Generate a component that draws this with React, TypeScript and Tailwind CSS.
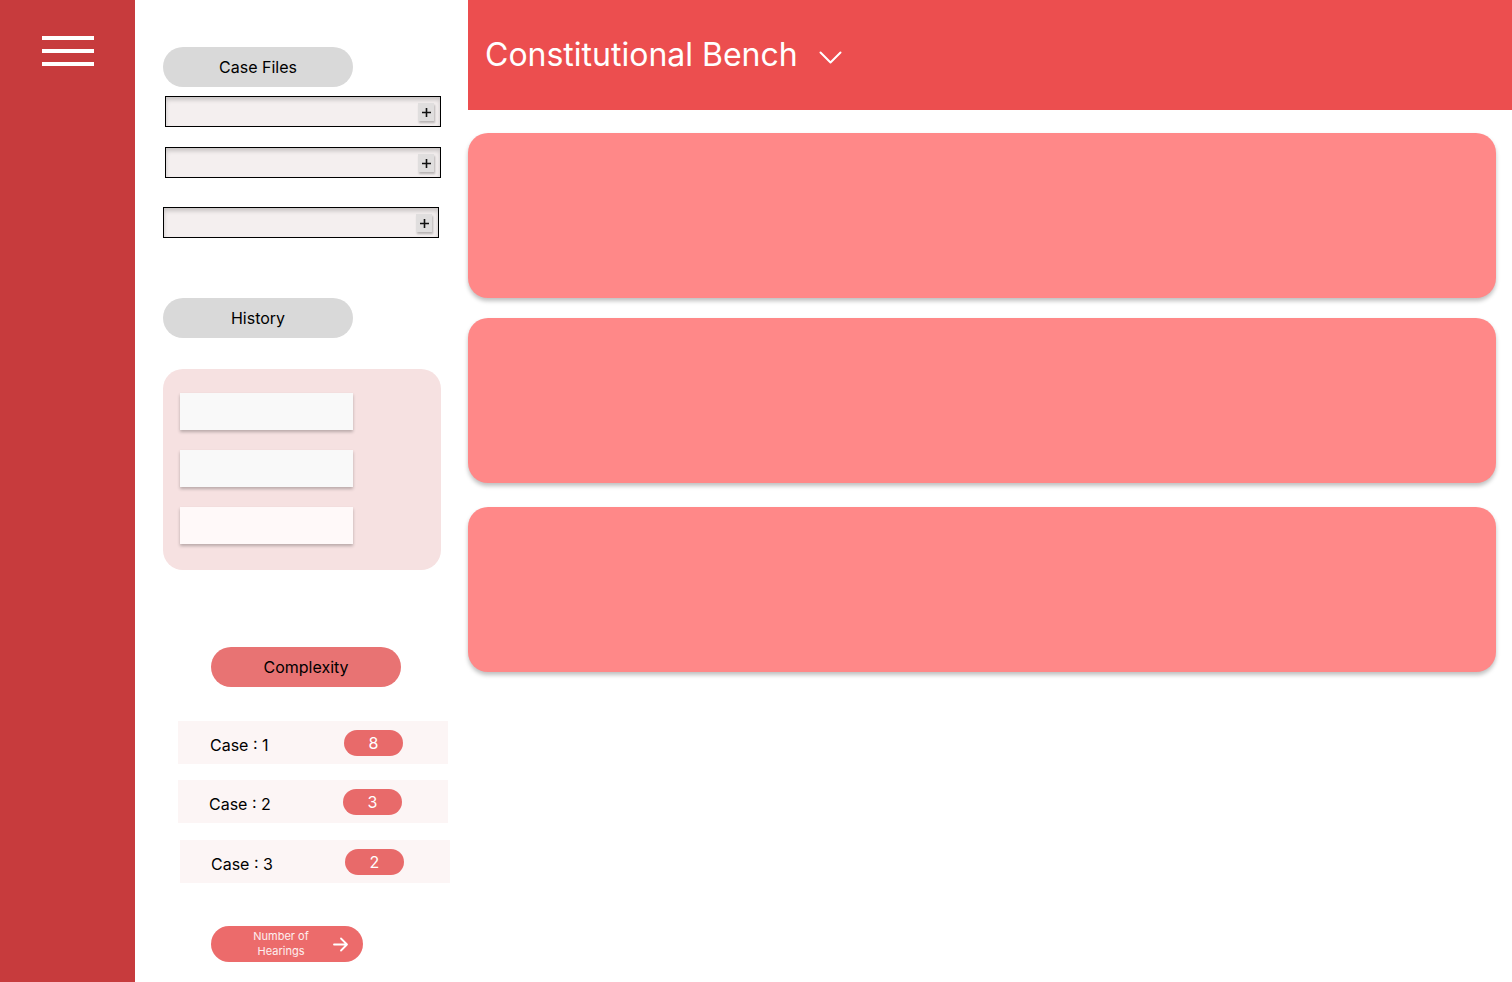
import React from 'react';

const cases = [
  { label: 'Case : 1', value: 8, shift: 'ml-[15px]', gap: 'mt-[34px]', text: 'pl-[32px]' },
  { label: 'Case : 2', value: 3, shift: 'ml-[15px]', gap: 'mt-[16px]', text: 'pl-[31px]' },
  { label: 'Case : 3', value: 2, shift: 'ml-[17px]', gap: 'mt-[17px]', text: 'pl-[31px]' },
];

const FileInput: React.FC<{ className: string }> = ({ className }) => (
  <div
    className={`relative h-[31px] w-[276px] border border-black bg-[#f4efef] shadow-[inset_0_3px_4px_rgba(0,0,0,0.18)] ${className}`}
  >
    <button className="absolute right-[6px] top-[6px] flex h-[18px] w-[16px] items-center justify-center bg-[#e0dede] shadow-[1px_2px_2px_rgba(0,0,0,0.25)]">
      <svg width="9" height="9" viewBox="0 0 9 9">
        <path d="M4.5 0v9M0 4.5h9" stroke="#111" strokeWidth="1.6" />
      </svg>
    </button>
  </div>
);

const PillButton: React.FC<{ label: string; className: string }> = ({ label, className }) => (
  <button
    className={`flex h-[40px] w-[190px] items-center justify-center rounded-[20px] text-[16px] text-black ${className}`}
  >
    {label}
  </button>
);

export default function App() {
  return (
    <div className="flex h-[982px] w-full overflow-hidden bg-white font-['Inter',sans-serif]">
      {/* sidebar */}
      <aside className="w-[135px] shrink-0 bg-[#c73b3d] pl-[42px] pt-[36px]">
        <div className="flex flex-col gap-[9px]">
          <span className="h-[4px] w-[52px] bg-white" />
          <span className="h-[4px] w-[52px] bg-white" />
          <span className="h-[4px] w-[52px] bg-white" />
        </div>
      </aside>

      {/* left panel */}
      <section className="flex w-[333px] shrink-0 flex-col items-start pl-[28px]">
        <PillButton label="Case Files" className="mt-[47px] bg-[#d9d9d9]" />
        <FileInput className="ml-[2px] mt-[9px]" />
        <FileInput className="ml-[2px] mt-[20px]" />
        <FileInput className="mt-[29px]" />

        <PillButton label="History" className="mt-[60px] bg-[#d9d9d9]" />
        <div className="mt-[31px] flex h-[201px] w-[278px] flex-col gap-[20px] rounded-[20px] bg-[#f6e1e1] pl-[17px] pt-[24px]">
          <div className="h-[37px] w-[173px] bg-[#f9f9f9] shadow-[0_2px_3px_rgba(0,0,0,0.25)]" />
          <div className="h-[37px] w-[173px] bg-[#f9f9f9] shadow-[0_2px_3px_rgba(0,0,0,0.25)]" />
          <div className="h-[37px] w-[173px] bg-[#fff9f9] shadow-[0_2px_3px_rgba(0,0,0,0.25)]" />
        </div>

        <PillButton label="Complexity" className="ml-[48px] mt-[77px] bg-[#e87373]" />

        {cases.map((c) => (
          <div
            key={c.label}
            className={`flex h-[43px] w-[270px] items-center bg-[#fcf5f5] ${c.shift} ${c.gap} ${c.text}`}
          >
            <span className="mt-[4px] w-[134px] text-[16px] text-black">{c.label}</span>
            <span className="flex h-[26px] w-[59px] items-center justify-center rounded-[13px] bg-[#e86a6a] text-[16px] text-white">
              {c.value}
            </span>
          </div>
        ))}

        <button className="ml-[48px] mt-[43px] flex h-[36px] w-[152px] items-center rounded-[18px] bg-[#ec6b6b] pl-[36px] text-white">
          <span className="w-[68px] text-center text-[11px] leading-[15px] text-white/90">
            Number of
            <br />
            Hearings
          </span>
          <svg className="ml-[17px]" width="17" height="17" viewBox="0 0 17 17" fill="none">
            <path d="M2 8.5h13M9 2.5l6 6-6 6" stroke="white" strokeWidth="1.8" strokeLinecap="round" strokeLinejoin="round" />
          </svg>
        </button>
      </section>

      {/* main */}
      <main className="flex min-w-0 flex-1 flex-col">
        <header className="flex h-[110px] items-center bg-[#ec4e4f] pl-[17px]">
          <h1 className="text-[32px] font-normal text-white">Constitutional Bench</h1>
          <svg className="ml-[21px] mt-[6px]" width="23" height="14" viewBox="0 0 23 14" fill="none">
            <path d="M1.5 1.5l10 10 10-10" stroke="white" strokeWidth="2" strokeLinecap="round" strokeLinejoin="round" />
          </svg>
        </header>
        <div className="mr-[16px] mt-[23px] flex flex-col">
          <div className="h-[165px] rounded-[20px] bg-[#ff8888] shadow-[0_3px_4px_rgba(0,0,0,0.25)]" />
          <div className="mt-[20px] h-[165px] rounded-[20px] bg-[#ff8888] shadow-[0_3px_4px_rgba(0,0,0,0.25)]" />
          <div className="mt-[24px] h-[165px] rounded-[20px] bg-[#ff8888] shadow-[0_3px_4px_rgba(0,0,0,0.25)]" />
        </div>
      </main>
    </div>
  );
}
